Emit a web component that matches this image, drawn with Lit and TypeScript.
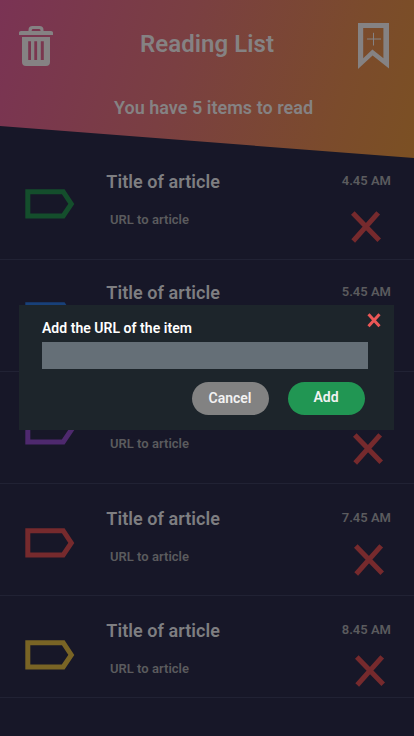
import { LitElement, html, css } from "lit";
import { customElement, property } from "lit/decorators.js";
import { styleMap } from "lit/directives/style-map.js";

interface Article {
  time: string;
  color: string;
  // fine vertical offsets of the row's parts, in pixels
  tag: number;
  title: number;
  clock: number;
  cross: number;
  inset: number;
}

const ARTICLES: Article[] = [
  { time: "4.45 AM", color: "#144e2c", tag: 41, title: 24, clock: 25, cross: 22, inset: 33 },
  { time: "5.45 AM", color: "#184079", tag: 42, title: 23, clock: 24, cross: 22, inset: 32 },
  { time: "6.45 AM", color: "#4e296e", tag: 43, title: 24, clock: 25, cross: 20, inset: 31 },
  { time: "7.45 AM", color: "#762a2d", tag: 44, title: 25, clock: 26, cross: 18, inset: 30 },
  { time: "8.45 AM", color: "#796425", tag: 44, title: 25, clock: 26, cross: 17, inset: 29 },
];

@customElement("article-row")
class ArticleRow extends LitElement {
  @property({ attribute: false }) item!: Article;

  static styles = css`
    :host { display: flex; height: 112px; box-sizing: border-box; border-bottom: 1px solid #212234; }
    :host(:last-of-type) { height: 102px; }
    .tag { display: block; width: 50px; height: 30px; margin-left: 25px; flex: none; }
    .text { margin-left: 31.3px; flex: 1; }
    .title { font-size: 18px; line-height: 20px; font-weight: 600; letter-spacing: 0.06px; color: #7e7e81; }
    .url { margin: 20px 0 0 3.7px; font-size: 13px; line-height: 16px; font-weight: 600; letter-spacing: 0.02px; color: #5b5b5e; }
    .side { display: flex; flex-direction: column; align-items: flex-end; }
    .time { font-size: 13px; line-height: 16px; font-weight: 600; color: #5b5b5e; margin-right: 23px; }
    .cross { display: block; width: 30px; height: 32px; }
  `;

  render() {
    const a = this.item;
    return html`
      <svg class="tag" style=${styleMap({ marginTop: a.tag + "px" })} viewBox="0 0 50 30">
        <path d="M2.8 2.7H38.2L46.3 15L38.2 27H2.8Z" fill="none" stroke=${a.color} stroke-width="5" />
      </svg>
      <div class="text" style=${styleMap({ paddingTop: a.title + "px" })}>
        <div class="title">Title of article</div>
        <div class="url">URL to article</div>
      </div>
      <div class="side" style=${styleMap({ paddingTop: a.clock + "px" })}>
        <div class="time">${a.time}</div>
        <svg class="cross" style=${styleMap({ marginTop: a.cross + "px", marginRight: a.inset + "px" })} viewBox="0 0 30 32">
          <path d="M1.8 2L28.2 29.2M27.2 1.8L2.2 30" fill="none" stroke="#762a2d" stroke-width="5" />
        </svg>
      </div>
    `;
  }
}

@customElement("app-root")
class AppRoot extends LitElement {
  static styles = css`
    :host { display: block; position: relative; width: 414px; height: 736px; overflow: hidden;
      background: #171728; font-family: Roboto, sans-serif; }
    .hero { height: 158px; margin-bottom: -10px; box-sizing: border-box; padding-top: 23px;
      background: linear-gradient(107deg, #7a3354 0%, #7a3f42 42%, #7b4b2c 80%, #7b5023 100%);
      clip-path: polygon(0 126px, 0 0, 100% 0, 100% 158px); }
    .bar { display: flex; justify-content: space-between; height: 50px; padding: 0 24px 0 19px; }
    .trash { display: block; width: 34px; height: 40px; margin-top: 3px; }
    .mark { display: block; width: 32px; height: 46px; }
    .heading { margin: 7px 0 0 3px; font-size: 24px; line-height: 28px; font-weight: 600; letter-spacing: 0.06px; color: #858283; }
    .count { margin: 24px 0 0; padding-left: 13px; text-align: center; font-size: 18px; line-height: 22px; font-weight: 600; letter-spacing: 0.02px; color: #858283; }
    .dialog { position: absolute; left: 19px; top: 305px; width: 375px; height: 125px; box-sizing: border-box;
      padding: 8px 13px 0 23px; background: #1d252b; }
    .top { display: flex; justify-content: space-between; height: 29px; }
    .label { margin-top: 7px; font-size: 14px; line-height: 16px; font-weight: 600; letter-spacing: 0.03px; color: #fff; }
    .close { display: block; width: 14px; height: 15px; }
    .field { width: 326px; height: 27px; background: #656f77; }
    .actions { display: flex; justify-content: flex-end; gap: 19px; margin: 13px 16px 0 0; }
    .button { box-sizing: border-box; width: 77px; height: 33px; border: 0; border-radius: 17px; padding: 0 1px 0 0;
      font: 600 14px/33px Roboto, sans-serif; color: #f2f2f2; background: #828282; }
    .add { background: #219653; line-height: 31px; padding-bottom: 2px; }
  `;

  render() {
    return html`
      <div class="hero">
        <div class="bar">
          <svg class="trash" viewBox="0 0 34 40" fill="#858283">
            <path fill-rule="evenodd" d="M0 9V6.6Q0 5 2 5H9.5V4Q9.5 0 13.5 0H20.5Q24.5 0 24.5 4V5H32Q34 5 34 6.6V9ZM12.7 5H21.5V4.4Q21.5 3 20 3H14.2Q12.7 3 12.7 4.4Z" />
            <path fill-rule="evenodd" d="M3 11H31V36Q31 40 27 40H7Q3 40 3 36ZM9.2 15.2V34H12V15.2ZM15.3 15.2V34H18.1V15.2ZM21.8 15.2V34H24.8V15.2Z" />
          </svg>
          <h1 class="heading">Reading List</h1>
          <svg class="mark" viewBox="0 0 32 46">
            <path fill="#858283" fill-rule="evenodd" d="M0 0H31V45.4L14.6 32.5L0 46ZM5.2 5V35.3L14.4 26.6L25.4 35.3V5Z" />
            <path d="M9 16H23M15.5 9.8V22.5" fill="none" stroke="#858283" stroke-width="1" />
          </svg>
        </div>
        <p class="count">You have 5 items to read</p>
      </div>
      ${ARTICLES.map((a) => html`<article-row .item=${a}></article-row>`)}
      <div class="dialog">
        <div class="top">
          <div class="label">Add the URL of the item</div>
          <svg class="close" viewBox="0 0 14 15">
            <path d="M1.5 1.3L12.5 13.2M12.5 1.3L1.5 13.2" fill="none" stroke="#eb5757" stroke-width="3" />
          </svg>
        </div>
        <div class="field"></div>
        <div class="actions">
          <button class="button">Cancel</button>
          <button class="button add">Add</button>
        </div>
      </div>
    `;
  }
}
